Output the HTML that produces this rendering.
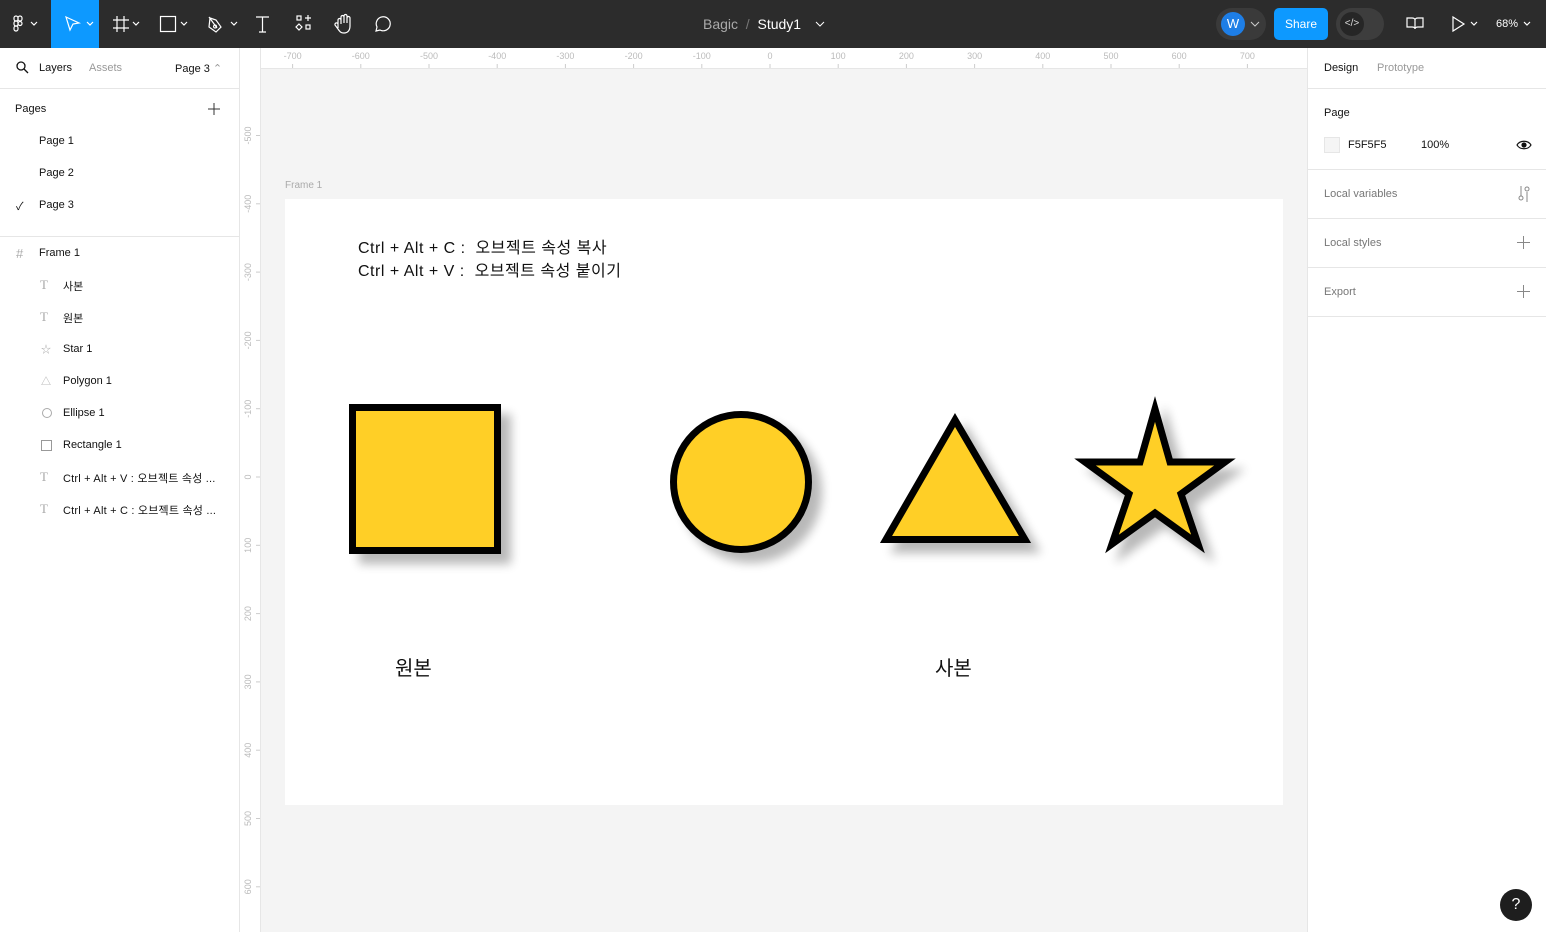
<!DOCTYPE html>
<html><head><meta charset="utf-8"><style>
*{margin:0;padding:0;box-sizing:border-box}
body{width:1546px;height:932px;overflow:hidden;font-family:"Liberation Sans","Noto Sans CJK KR",sans-serif;background:#fff;position:relative;color:#111}
.abs{position:absolute}
.top{left:0;top:0;width:1546px;height:48px;background:#2c2c2c}
.t{font-size:11px;position:absolute;white-space:nowrap}
.ln{position:absolute;background:#e6e6e6}
</style></head><body>
<div class="abs top"></div>
<div class="abs" style="left:51px;top:0;width:48px;height:48px;background:#0d99ff"></div>
<svg class="abs" style="left:0;top:0" width="400" height="48" fill="none" stroke="#fff" stroke-width="1.2">
<g transform="translate(13,16)"><rect x="1" y="0" width="4" height="5" rx="2"/><rect x="5" y="0" width="4" height="5" rx="2"/><rect x="1" y="5" width="4" height="5" rx="2"/><circle cx="7" cy="7.5" r="2"/><rect x="1" y="10" width="4" height="5" rx="2"/></g>
<path d="M31 22l3 3 3-3M87 22l3 3 3-3M133 22l3 3 3-3M181 22l3 3 3-3M231 22l3 3 3-3"/>
<path d="M66 17l13 6-6 1-3 6z"/>
<path d="M117 16v16M124 16v16M113 20h16M113 28h16"/>
<rect x="160.5" y="16.5" width="15" height="15"/>
<path d="M210 18l6 2 5 7-5 5-7-5zM209 17l8 11M215 25a1.5 1.5 0 1 0 .1 0"/>
<path d="M256 17h13M262.5 17v15M259 32h7"/>
<rect x="297" y="16" width="4" height="4"/><rect x="306" y="25" width="4" height="4"/><path d="M308 15v6M305 18h6M299 24l3 3-3 3-3-3z"/>
<path d="M338 28v-8a1.5 1.5 0 0 1 3 0v4-7a1.5 1.5 0 0 1 3 0v6-7a1.5 1.5 0 0 1 3 0v7-5a1.5 1.5 0 0 1 3 0v8c0 4-2 7-6 7-3 0-4-1-6-4l-3-4a1.5 1.5 0 0 1 3-1z"/>
<path d="M376 31l1-4a7 7 0 1 1 3 3z"/>
</svg>
<div class="t" style="left:703px;top:16px;font-size:14px;color:#aaa">Bagic <span style="color:#777">&nbsp;/&nbsp;</span> <span style="color:#fff">Study1</span></div>
<svg class="abs" style="left:815px;top:20px" width="10" height="8" fill="none" stroke="#fff"><path d="M1 2l4 4 4-4"/></svg>
<div class="abs" style="left:1216px;top:8px;width:50px;height:32px;border-radius:16px;background:#3a3a3a"></div>
<div class="abs" style="left:1221px;top:12px;width:24px;height:24px;border-radius:12px;background:#1e7ee6;color:#fff;font-size:13px;text-align:center;line-height:24px">W</div>
<svg class="abs" style="left:1250px;top:20px" width="10" height="8" fill="none" stroke="#ccc"><path d="M1 2l4 4 4-4"/></svg>
<div class="abs" style="left:1274px;top:8px;width:54px;height:32px;border-radius:5px;background:#0d99ff;color:#fff;font-size:12px;text-align:center;line-height:32px">Share</div>
<div class="abs" style="left:1336px;top:8px;width:48px;height:32px;border-radius:16px;background:#3d3d3d"></div>
<div class="abs" style="left:1340px;top:12px;width:24px;height:24px;border-radius:12px;background:#262626;color:#ddd;font-size:10px;text-align:center;line-height:24px">&lt;/&gt;</div>
<svg class="abs" style="left:1400px;top:10px" width="146" height="28" fill="none" stroke="#fff" stroke-width="1.2">
<path d="M7 8h5c2 0 3 1 3 2v9c0-1-1-2-3-2H7zM23 8h-5c-2 0-3 1-3 2v9c0-1 1-2 3-2h5z"/>
<path d="M53 7l11 7-11 7z"/><path d="M71 12l3 3 3-3M124 12l3 3 3-3"/>
</svg>
<div class="t" style="left:1496px;top:18px;color:#fff;font-size:11px">68%</div>

<div class="ln" style="left:239px;top:48px;width:1px;height:884px"></div>
<svg class="abs" style="left:15px;top:60px" width="16" height="16" fill="none" stroke="#111" stroke-width="1.3"><circle cx="6" cy="6" r="4"/><path d="M9 9l4 4"/></svg>
<div class="t" style="left:39px;top:62px">Layers</div>
<div class="t" style="left:89px;top:62px;color:#999">Assets</div>
<div class="t" style="left:175px;top:62px">Page 3 <span style="color:#999">⌃</span></div>
<div class="ln" style="left:0;top:88px;width:239px;height:1px"></div>
<div class="t" style="left:15px;top:103px">Pages</div>
<svg class="abs" style="left:207px;top:102px" width="14" height="14" stroke="#333"><path d="M7 1v12M1 7h12"/></svg>
<div class="t" style="left:39px;top:135px">Page 1</div>
<div class="t" style="left:39px;top:167px">Page 2</div>
<div class="t" style="left:16px;top:198px">✓</div>
<div class="t" style="left:39px;top:199px">Page 3</div>
<div class="ln" style="left:0;top:236px;width:239px;height:1px"></div>
<div class="t" style="left:16px;top:246px;color:#aaa;font-size:13px">#</div>
<div class="t" style="left:39px;top:247px">Frame 1</div>
<div class="t" style="left:40px;top:277px;color:#aaa;font-size:13px;font-family:'Liberation Serif',serif">T</div><div class="t" style="left:63px;top:278px">사본</div>
<div class="t" style="left:40px;top:309px;color:#aaa;font-size:13px;font-family:'Liberation Serif',serif">T</div><div class="t" style="left:63px;top:310px">원본</div>
<div class="t" style="left:41px;top:341px;color:#aaa;font-size:10px">☆</div><div class="t" style="left:63px;top:343px">Star 1</div>
<div class="t" style="left:41px;top:373px;color:#aaa;font-size:10px">△</div><div class="t" style="left:63px;top:375px">Polygon 1</div>
<div class="abs" style="left:42px;top:408px;width:10px;height:10px;border:1px solid #aaa;border-radius:50%"></div><div class="t" style="left:63px;top:407px">Ellipse 1</div>
<div class="abs" style="left:41px;top:440px;width:11px;height:11px;border:1px solid #999"></div><div class="t" style="left:63px;top:439px">Rectangle 1</div>
<div class="t" style="left:40px;top:469px;color:#aaa;font-size:13px;font-family:'Liberation Serif',serif">T</div><div class="t" style="left:63px;top:470px;letter-spacing:0.2px">Ctrl + Alt + V : 오브젝트 속성 ...</div>
<div class="t" style="left:40px;top:501px;color:#aaa;font-size:13px;font-family:'Liberation Serif',serif">T</div><div class="t" style="left:63px;top:502px;letter-spacing:0.2px">Ctrl + Alt + C : 오브젝트 속성 ...</div>

<div class="abs" style="left:240px;top:48px;width:1067px;height:884px;background:#f4f4f4"></div>
<div class="abs" style="left:240px;top:48px;width:1067px;height:21px;background:#fff;border-bottom:1px solid #e6e6e6"></div>
<div class="abs" style="left:240px;top:48px;width:21px;height:884px;background:#fff;border-right:1px solid #e6e6e6"></div>
<div class="t" style="left:285px;top:180px;color:#aaa;font-size:10px">Frame 1</div>
<div class="abs" style="left:285px;top:199px;width:998px;height:606px;background:#fff"></div>
<div class="t" style="left:358px;top:237px;font-size:16px;line-height:23px;color:#111;letter-spacing:0.5px">Ctrl + Alt + C :&nbsp; 오브젝트 속성 복사<br>Ctrl + Alt + V :&nbsp; 오브젝트 속성 붙이기</div>
<div class="t" style="left:395px;top:652px;font-size:20px">원본</div>
<div class="t" style="left:935px;top:652px;font-size:20px">사본</div>
<svg class="abs" style="left:0;top:0" width="1546" height="932">
<defs><filter id="sh" x="-20%" y="-20%" width="150%" height="150%"><feGaussianBlur in="SourceAlpha" stdDeviation="5"/><feOffset dx="10" dy="10"/><feComponentTransfer><feFuncA type="linear" slope="0.28"/></feComponentTransfer><feMerge><feMergeNode/><feMergeNode in="SourceGraphic"/></feMerge></filter></defs>
<g fill="#ffcf26" stroke="#000" stroke-width="7" filter="url(#sh)">
<rect x="352.5" y="407.5" width="145" height="143"/>
<circle cx="741" cy="482" r="67.5"/>
<path d="M955 420L886 539.5H1025z"/>
<path d="M1155 409L1140 462H1085L1129 494L1112 544L1155 513L1198 544L1181 494L1225 462H1170z"/>
</g>
<g font-family="Liberation Sans" font-size="9" fill="#bbb" id="rul"></g>
</svg>
<script>
var g=document.getElementById('rul'),s='';
for(var i=-7;i<=7;i++){var x=770+i*68.2;s+='<text x="'+x+'" y="59" text-anchor="middle">'+(i*100)+'</text><line x1="'+x+'" y1="64" x2="'+x+'" y2="68" stroke="#ccc"/>';}
for(var j=-5;j<=6;j++){var y=477+j*68.3;s+='<text transform="translate(251,'+y+') rotate(-90)" text-anchor="middle">'+(j*100)+'</text><line x1="256" y1="'+y+'" x2="260" y2="'+y+'" stroke="#ccc"/>';}
g.innerHTML=s;
</script>

<div class="ln" style="left:1307px;top:48px;width:1px;height:884px"></div>
<div class="t" style="left:1324px;top:62px">Design</div>
<div class="t" style="left:1377px;top:62px;color:#999">Prototype</div>
<div class="ln" style="left:1308px;top:88px;width:238px;height:1px"></div>
<div class="t" style="left:1324px;top:107px">Page</div>
<div class="abs" style="left:1324px;top:137px;width:16px;height:16px;background:#f5f5f5;border:1px solid #e6e6e6"></div>
<div class="t" style="left:1348px;top:139px">F5F5F5</div>
<div class="t" style="left:1421px;top:139px">100%</div>
<svg class="abs" style="left:1516px;top:139px" width="16" height="12" fill="none" stroke="#111" stroke-width="1.2"><path d="M1 6c3-5 11-5 14 0-3 5-11 5-14 0z"/><circle cx="8" cy="6" r="2" fill="#111"/></svg>
<div class="ln" style="left:1308px;top:169px;width:238px;height:1px"></div>
<div class="t" style="left:1324px;top:188px;color:#777">Local variables</div>
<svg class="abs" style="left:1516px;top:185px" width="16" height="18" fill="none" stroke="#888"><path d="M5 1v10M11 7v10"/><circle cx="5" cy="13" r="2"/><circle cx="11" cy="4" r="2"/></svg>
<div class="ln" style="left:1308px;top:218px;width:238px;height:1px"></div>
<div class="t" style="left:1324px;top:237px;color:#777">Local styles</div>
<svg class="abs" style="left:1517px;top:236px" width="13" height="13" stroke="#888"><path d="M6.5 0v13M0 6.5h13"/></svg>
<div class="ln" style="left:1308px;top:267px;width:238px;height:1px"></div>
<div class="t" style="left:1324px;top:286px;color:#777">Export</div>
<svg class="abs" style="left:1517px;top:285px" width="13" height="13" stroke="#888"><path d="M6.5 0v13M0 6.5h13"/></svg>
<div class="ln" style="left:1308px;top:316px;width:238px;height:1px"></div>
<div class="abs" style="left:1500px;top:889px;width:32px;height:32px;border-radius:16px;background:#1e1e1e;color:#fff;text-align:center;line-height:32px;font-size:16px">?</div>
</body></html>
